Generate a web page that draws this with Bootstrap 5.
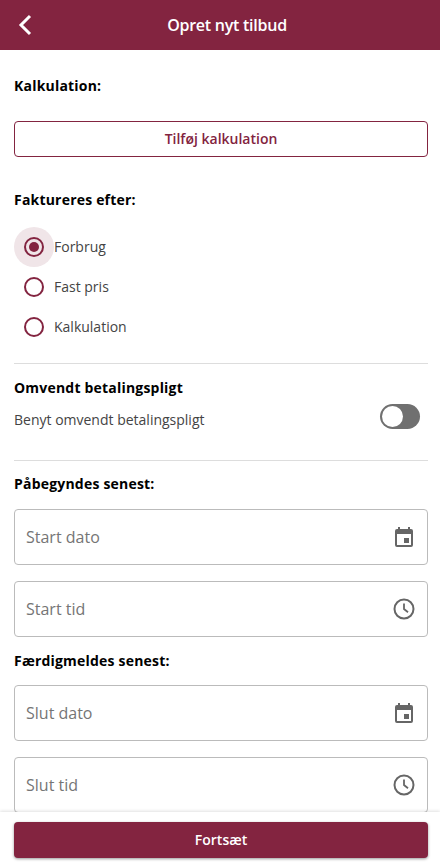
<!DOCTYPE html>
<html lang="da">

<head>
  <meta charset="UTF-8" />
  <title>Opret nyt tilbud</title>
  <meta name="viewport" content="width=device-width, initial-scale=1" />
  <link href="https://cdn.jsdelivr.net/npm/bootstrap@5.3.3/dist/css/bootstrap.min.css" rel="stylesheet" />
  <script src="https://cdn.jsdelivr.net/npm/bootstrap@5.3.3/dist/js/bootstrap.bundle.min.js"></script>
  <style>
    html, body { height: 100%; overflow: hidden; }
    body { font-family: "Open Sans", sans-serif; font-size: 14px; color: #444; }

    .top-bar { height: 50px; background: #832440; color: #fff; flex: none; }
    .top-title { font-size: 16px; font-weight: 600; line-height: 50px; letter-spacing: -.25px; padding-left: 14px; }
    .back-link { left: 18px; top: 13px; line-height: 0; }

    .page-body { min-height: 0; overflow: hidden; padding: 0 12px 0 14px; }
    .sect-title { font-size: 14px; font-weight: 700; color: #000; line-height: 20px; margin: 0; letter-spacing: .2px; }
    .sect-kalk { margin-top: 26px; }
    .sect-fakt { margin-top: 33px; }
    .sect-omv { margin-top: 14px; }
    .sect-start { margin-top: 13px; }
    .sect-slut { margin-top: 14px; }

    .btn-add {
      height: 36px; padding: 0 0 2px; font-size: 14px; font-weight: 600; color: #832440;
      border: 1px solid #832440; border-radius: 4px; background: #fff; margin-top: 25px;
    }

    .radio-group { margin-top: 17px; }
    .radio-row { height: 40px; }
    .radio-text { padding-bottom: 2px; }
    .radio-dot {
      width: 40px; height: 40px; border-radius: 50%; flex: none;
    }
    .radio-dot.on { background: #f0e5e8; }
    .radio-ring { width: 20px; height: 20px; border: 2px solid #832440; border-radius: 50%; }
    .radio-core { width: 10px; height: 10px; border-radius: 50%; background: #832440; }

    .sep { margin: 0; border-color: #ddd; opacity: 1; }
    .sep-a { margin-top: 16px; }
    .sep-b { margin-top: 30px; }

    .switch-row { margin-top: 6px; }
    .switch-label { margin-top: 5px; }
    .switch-track { width: 40px; height: 25px; border-radius: 13px; background: #707070; flex: none; margin-right: 8px; padding: 2px; }
    .switch-thumb { width: 21px; height: 21px; border-radius: 50%; background: #fff; }

    .date-field {
      height: 56px; border: 1px solid #bbb; border-radius: 4px; padding: 0 11px 0 11px;
      font-size: 16px; color: #757575; flex: none; margin-top: 16px;
    }
    .date-field.first-a { margin-top: 15px; }
    .date-field.first-b { margin-top: 14px; }

    .foot-bar { height: 56px; flex: none; background: #fff; padding: 10px 12px 10px 14px; box-shadow: 0 -1px 3px rgba(0, 0, 0, .12); position: relative; }
    .btn-next {
      height: 36px; padding: 0 0 2px; background: #832440; color: #fff; font-size: 14px; font-weight: 600;
      border: 0; border-radius: 4px; box-shadow: 0 1px 3px rgba(0, 0, 0, .4);
    }
  </style>
</head>

<body class="d-flex flex-column">

  <!-- Header -->
  <div class="top-bar position-relative text-center">
    <a class="back-link position-absolute" href="#">
      <svg width="14" height="24" viewBox="0 0 14 24"><path d="M12 3 3 12l9 9" fill="none" stroke="#fff" stroke-width="3"/></svg>
    </a>
    <div class="top-title">Opret nyt tilbud</div>
  </div>

  <div class="page-body flex-grow-1">
    <p class="sect-title sect-kalk">Kalkulation:</p>
    <button class="btn btn-add w-100 d-block">Tilføj kalkulation</button>

    <p class="sect-title sect-fakt">Faktureres efter:</p>
    <div class="radio-group">
      <div class="radio-row d-flex align-items-center">
        <span class="radio-dot on d-flex align-items-center justify-content-center"><span class="radio-ring d-flex align-items-center justify-content-center"><span class="radio-core"></span></span></span>
        <span class="radio-text">Forbrug</span>
      </div>
      <div class="radio-row d-flex align-items-center">
        <span class="radio-dot d-flex align-items-center justify-content-center"><span class="radio-ring"></span></span>
        <span class="radio-text">Fast pris</span>
      </div>
      <div class="radio-row d-flex align-items-center">
        <span class="radio-dot d-flex align-items-center justify-content-center"><span class="radio-ring"></span></span>
        <span class="radio-text">Kalkulation</span>
      </div>
    </div>

    <hr class="sep sep-a" />

    <p class="sect-title sect-omv">Omvendt betalingspligt</p>
    <div class="switch-row d-flex align-items-start justify-content-between">
      <span class="switch-label">Benyt omvendt betalingspligt</span>
      <span class="switch-track d-block"><span class="switch-thumb d-block"></span></span>
    </div>

    <hr class="sep sep-b" />

    <p class="sect-title sect-start">Påbegyndes senest:</p>
    <div class="date-field first-a d-flex align-items-center justify-content-between">
      <span>Start dato</span>
      <svg width="24" height="24" viewBox="0 0 24 24"><path fill="#666" d="M19 4h-1V2h-2v2H8V2H6v2H5a2 2 0 0 0-2 2v14a2 2 0 0 0 2 2h14a2 2 0 0 0 2-2V6a2 2 0 0 0-2-2zm0 16H5V9h14v11zm-2-7h-5v5h5v-5z"/></svg>
    </div>
    <div class="date-field d-flex align-items-center justify-content-between">
      <span>Start tid</span>
      <svg width="24" height="24" viewBox="0 0 24 24"><circle cx="12" cy="12" r="9.5" fill="none" stroke="#666" stroke-width="2"/><path d="M12 6.5V12l4 3.2" fill="none" stroke="#666" stroke-width="1.8"/></svg>
    </div>

    <p class="sect-title sect-slut">Færdigmeldes senest:</p>
    <div class="date-field first-b d-flex align-items-center justify-content-between">
      <span>Slut dato</span>
      <svg width="24" height="24" viewBox="0 0 24 24"><path fill="#666" d="M19 4h-1V2h-2v2H8V2H6v2H5a2 2 0 0 0-2 2v14a2 2 0 0 0 2 2h14a2 2 0 0 0 2-2V6a2 2 0 0 0-2-2zm0 16H5V9h14v11zm-2-7h-5v5h5v-5z"/></svg>
    </div>
    <div class="date-field d-flex align-items-center justify-content-between">
      <span>Slut tid</span>
      <svg width="24" height="24" viewBox="0 0 24 24"><circle cx="12" cy="12" r="9.5" fill="none" stroke="#666" stroke-width="2"/><path d="M12 6.5V12l4 3.2" fill="none" stroke="#666" stroke-width="1.8"/></svg>
    </div>
  </div>

  <!-- Footer -->
  <div class="foot-bar">
    <button class="btn btn-next w-100 d-block">Fortsæt</button>
  </div>

</body>

</html>
